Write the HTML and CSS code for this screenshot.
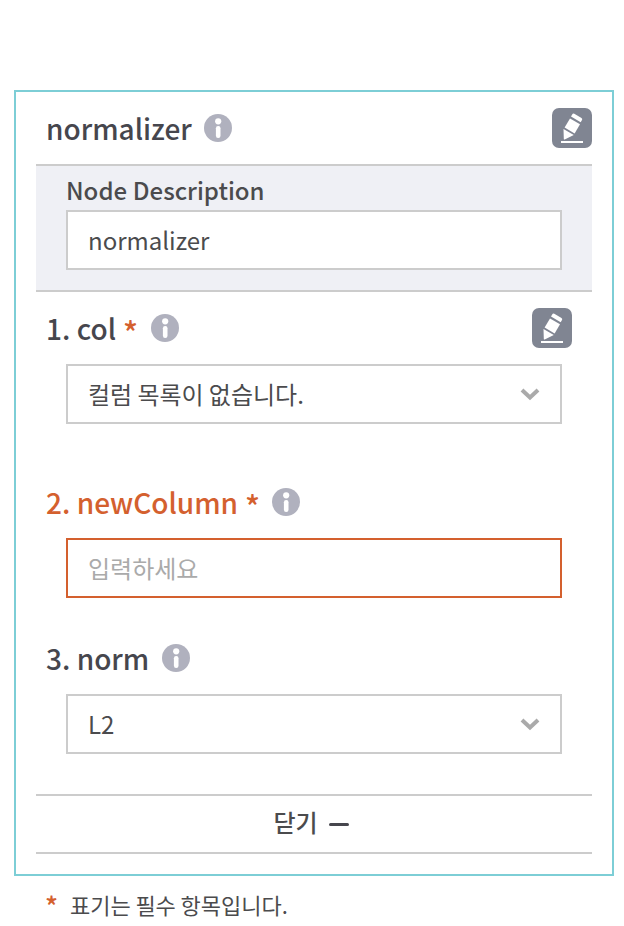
FILE: index.html
```html
<!DOCTYPE html>
<html lang="ko">
<head>
<meta charset="utf-8">
<title>normalizer</title>
<link rel="stylesheet" href="styles.css">
</head>
<body>
<svg class="defs" width="0" height="0">
  <symbol id="info" viewBox="0 0 28 28"><circle cx="14" cy="14" r="14" fill="#b0b1be"/><circle cx="14.200" cy="7.300" r="3.100" fill="#fff"/><rect x="11.900" y="12" width="4.600" height="12" rx="2.200" fill="#fff"/></symbol>
  <symbol id="edit" viewBox="0 0 40 40"><rect width="40" height="40" rx="7" fill="#808592"/><g fill="#fff"><path d="M19 8.600l1.200-2.200q.8-1.300 2.100-.6l7.200 4.200q1.200.8.500 2l-1.300 2.300z"/><path d="M18 10.400l10 5.800-5.400 9.200-10-5.800z"/><path d="M11.500 20.900l10.300 6-9.100 4.600q-1 .4-.9-.7z"/><path d="M9 33h22v2H9z"/></g></symbol>
  <symbol id="chev" viewBox="0 0 20 14"><path d="M2 3l8 7.500L18 3" fill="none" stroke="#aaa" stroke-width="4"/></symbol>
</svg>
<main class="panel">
  <header class="title row"><h1>normalizer</h1><svg class="info"><use href="#info"/></svg><svg class="edit"><use href="#edit"/></svg></header>
  <section class="description"><label>Node Description</label><div class="control">normalizer</div></section>
  <section class="field first"><div class="row"><h2>1. col</h2><b>*</b><svg class="info"><use href="#info"/></svg><svg class="edit"><use href="#edit"/></svg></div>
    <div class="control"><span>컬럼 목록이 없습니다.</span><svg class="chev"><use href="#chev"/></svg></div></section>
  <section class="field second error"><div class="row"><h2>2. newColumn</h2><b>*</b><svg class="info"><use href="#info"/></svg></div>
    <div class="control">입력하세요</div></section>
  <section class="field third"><div class="row"><h2>3. norm</h2><svg class="info"><use href="#info"/></svg></div>
    <div class="control"><span>L2</span><svg class="chev"><use href="#chev"/></svg></div></section>
  <footer class="close"><span>닫기</span><i></i></footer>
</main>
<p class="note"><b>*</b><span>표기는 필수 항목입니다.</span></p>
</body>
</html>
```
FILE: styles.css
```css
* { box-sizing: border-box; }
body { margin: 0; padding: 90px 10px 0 14px; background: #fff; color: #4b4b4d; font-family: "Noto Sans CJK KR", sans-serif; font-size: 24px; }
.defs { display: block; }
.panel { width: 600px; height: 786px; border: 2px solid #7dced6; padding: 0 20px; }
.row { display: flex; align-items: center; }
h1, h2 { margin: 0; font-size: 28px; line-height: 40px; font-weight: 500; white-space: nowrap; color: #46464d; }
h2 { word-spacing: -1.500px; }
b { color: #d4602e; font-weight: 500; font-size: 31px; line-height: 40px; height: 32px; width: 15px; margin-left: 7px; }
.info { width: 28px; height: 28px; margin-left: 12.500px; flex: none; }
.title .info { margin-left: 12px; }
.first .info { margin-left: 13px; }
.error .info { margin-left: 12px; }
.edit { width: 40px; height: 40px; margin-left: auto; }
.title { height: 72px; padding-left: 10px; }
.description { height: 128px; border: solid #ccc; border-width: 2px 0; background: #eff0f5; padding: 6px 30px; }
label { display: block; height: 38px; line-height: 36px; font-weight: 500; word-spacing: -1px; }
.control { height: 60px; border: 2px solid #ccc; background: #fff; padding: 0 20px; line-height: 36px; display: flex; align-items: center; justify-content: space-between; word-spacing: -1.500px; }
.chev { width: 20px; height: 14px; }
.field { padding: 0 20px 0 10px; }
.field .row { height: 40px; }
.field .control { margin: 16px 10px 0 20px; }
.first { margin-top: 16px; }
.second { margin-top: 58px; }
.third { margin-top: 40px; }
.error h2 { color: #d4602e; }
.error .control { border-color: #d4602e; color: #aaa; }
.close { margin-top: 40px; height: 60px; border: solid #ccc; border-width: 2px 0; padding-right: 6px; display: flex; align-items: center; justify-content: center; gap: 11px; font-weight: 500; line-height: 36px; }
.close span { margin-top: -4px; }
.close i { width: 20px; height: 3px; background: #46464d; border-radius: 2px; }
.note { margin: 12px 0 0 31px; display: flex; font-size: 22px; line-height: 32px; word-spacing: -1.500px; }
.note b { margin: 0 11px 0 0; width: 14px; height: 36px; font-size: 27px; line-height: 35px; }
```
